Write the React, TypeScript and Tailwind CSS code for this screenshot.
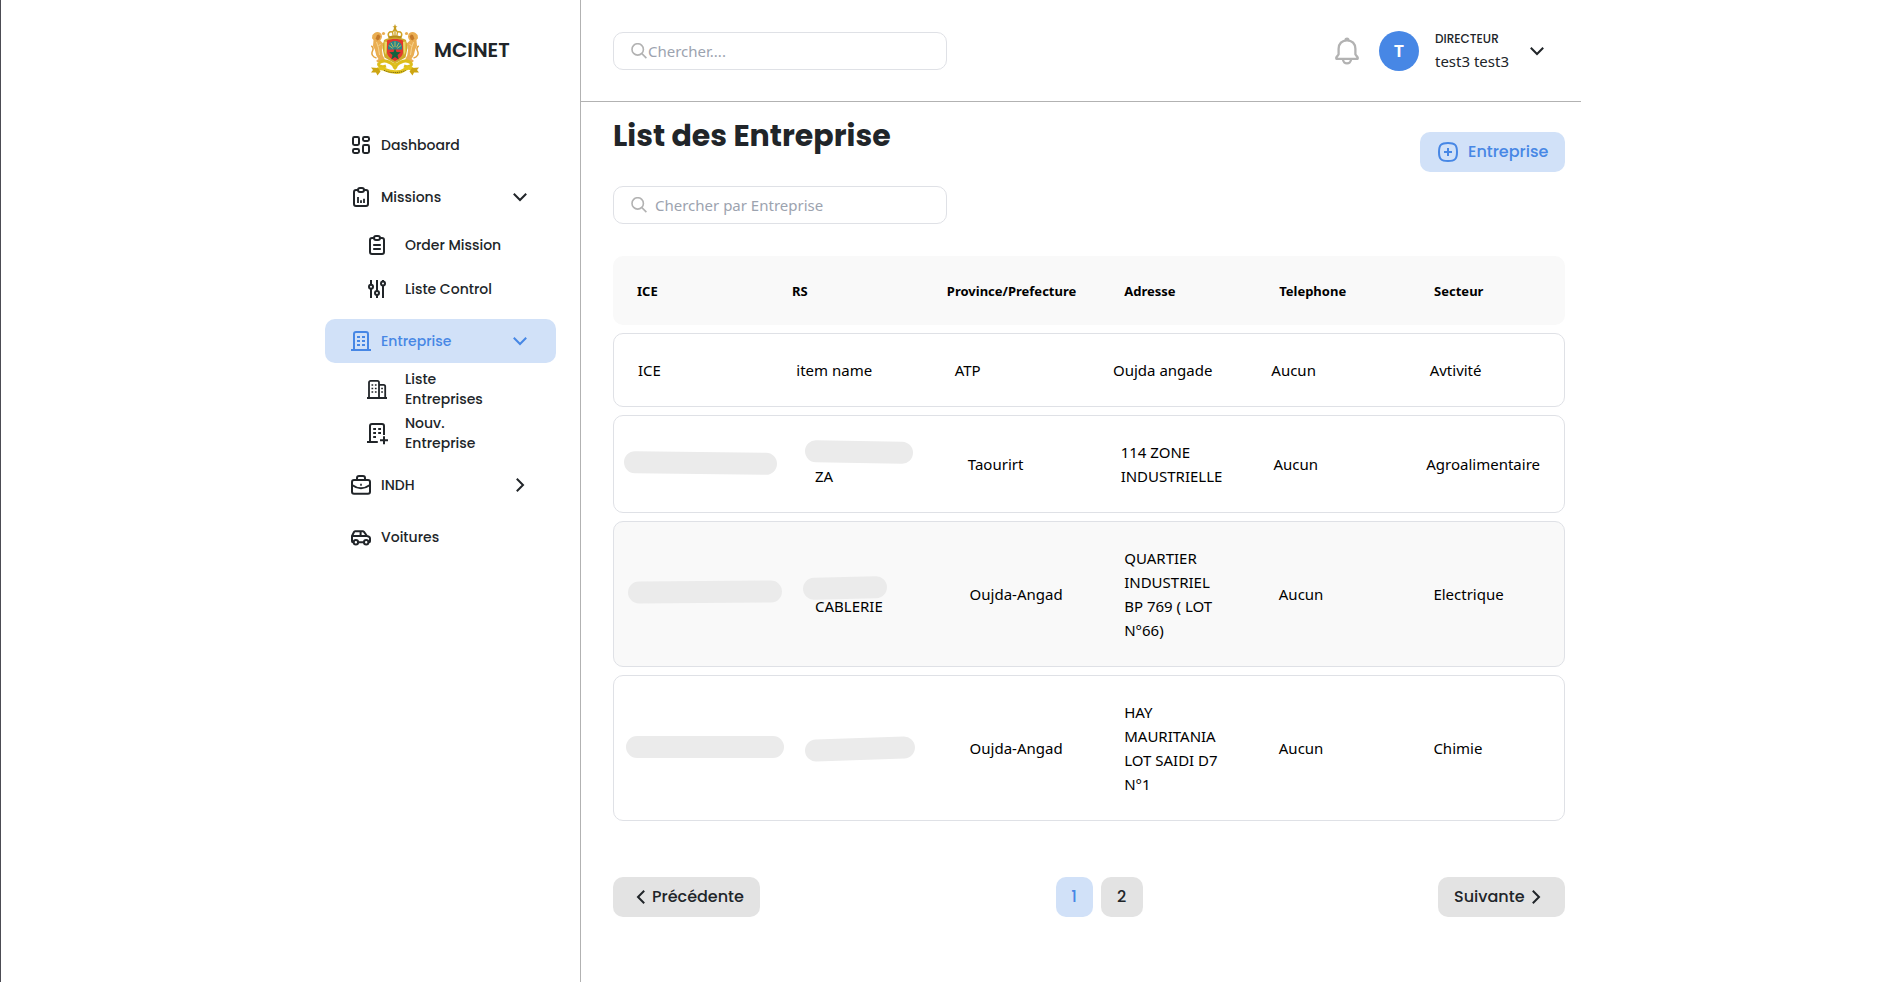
import React from "react";

type IconProps = { className?: string };

const SEGOE = "font-['Segoe_UI','Noto_Sans',sans-serif]";

function Icon({ className = "size-5 shrink-0", children }: { className?: string; children: React.ReactNode }) {
  return (
    <svg viewBox="0 0 20 20" className={className} fill="none" stroke="currentColor" strokeWidth="2" aria-hidden="true">
      {children}
    </svg>
  );
}

const DashboardIcon = () => (
  <Icon>
    <rect x="2" y="2" width="6" height="8" rx="1.4" />
    <rect x="12" y="2" width="6" height="4" rx="1.4" />
    <rect x="12" y="10" width="6" height="8" rx="1.4" />
    <rect x="2" y="14" width="6" height="4" rx="1.4" />
  </Icon>
);

const ClipboardBody = () => (
  <>
    <path d="M7 3H5a2 2 0 0 0-2 2v12a2 2 0 0 0 2 2h10a2 2 0 0 0 2-2V5a2 2 0 0 0-2-2h-2" />
    <rect x="7" y="1" width="6" height="4" rx="2" />
  </>
);

const ReportIcon = () => (
  <Icon>
    <ClipboardBody />
    <path strokeWidth="1.8" d="M7 10v6M10 13.2V16M13 11.8V16" />
  </Icon>
);

const OrderIcon = () => (
  <Icon>
    <ClipboardBody />
    <path strokeWidth="1.8" d="M6.2 10h7.6M6.2 14h7.6" />
  </Icon>
);

const SlidersIcon = () => (
  <Icon>
    <path d="M4 1v4.8M4 9.8V19M10 1v11M10 16v3M16 1v1.6M16 6.4V19" />
    <circle cx="4" cy="7.8" r="2" />
    <circle cx="10" cy="14" r="2" />
    <circle cx="16" cy="4.5" r="2" />
  </Icon>
);

const BuildingIcon = () => (
  <Icon>
    <path d="M3 19V3a2 2 0 0 1 2-2h10a2 2 0 0 1 2 2v16M0 19h20" />
    <path strokeWidth="1.8" d="M6 6h3M11 6h3M6 10h3M11 10h3M6 14h3M11 14h3" />
  </Icon>
);

const BuildingsIcon = () => (
  <Icon>
    <path strokeWidth="1.8" d="M2 18.8V3.400a1.600 1.600 0 0 1 1.600-1.600h6.800A1.600 1.600 0 0 1 12 3.400v15.400M12 5.800h4.600a1.600 1.600 0 0 1 1.600 1.600v11.400M0 19h20" />
    <path strokeWidth="1.500" d="M4.500 6h1.700M7.900 6h1.700M4.500 9.500h1.700M7.900 9.500h1.700M4.500 13h1.700M7.900 13h1.700M14.200 9.500h1.700M14.200 13h1.700" />
  </Icon>
);

const BuildingAddIcon = () => (
  <Icon className="size-5 shrink-0 overflow-visible">
    <path d="M3 19V3a2 2 0 0 1 2-2h10a2 2 0 0 1 2 2v9M0 19h10.800M17 13.200v8M13 17.200h8" />
    <path strokeWidth="1.800" d="M6.200 6h2.800M11.200 6H14M6.200 10h2.800M11.200 10H14M6.200 14h2.800" />
  </Icon>
);

const BriefcaseIcon = () => (
  <Icon>
    <rect x="1" y="5" width="18" height="13.800" rx="2" />
    <path d="M6 5V3a2 2 0 0 1 2-2h4a2 2 0 0 1 2 2v2M1 10c3 2.200 6 3.200 9 3.200s6-1 9-3.200" />
    <path d="M9.200 9.800h1.600" />
  </Icon>
);

const CarIcon = () => (
  <Icon>
    <path d="M2.600 15.200H2a1 1 0 0 1-1-1V9l2-4a1.200 1.200 0 0 1 1.100-.8h7.700c.4 0 .8.2 1 .5L16 9l2 .8a1.600 1.600 0 0 1 1 1.500v2.900a1 1 0 0 1-1 1h-.6M7.200 15.200h5.800M1 9h15M9.600 4.200V9" />
    <circle cx="4.900" cy="15.200" r="2.200" />
    <circle cx="15.200" cy="15.200" r="2.200" />
  </Icon>
);

function Chevron({ className = "" }: IconProps) {
  return (
    <svg viewBox="0 0 14 14" className={`size-3.5 shrink-0 ${className}`} fill="none" stroke="currentColor" strokeWidth="2" aria-hidden="true">
      <path d="M.8 3.800 7 10l6.200-6.200" />
    </svg>
  );
}

const SearchIcon = () => (
  <svg viewBox="0 0 16 16" className="size-4 shrink-0 text-[#b2b2b2]" fill="none" stroke="currentColor" strokeWidth="1.600" aria-hidden="true">
    <circle cx="6.700" cy="6.400" r="5.700" />
    <path d="m10.900 10.600 4.500 4.500" />
  </svg>
);

const BellIcon = () => (
  <svg viewBox="0 0 24 28" className="h-7 w-6" fill="none" stroke="currentColor" strokeWidth="2.300" strokeLinejoin="round" strokeLinecap="round" aria-hidden="true">
    <path d="M12 3.300c-5 0-8.400 3.500-8.400 8.500v5.500L1.300 20.500v1.300h21.400v-1.300l-2.300-3.200v-5.500c0-5-3.400-8.500-8.400-8.500Z" />
    <path d="M10.600 3c0-1.800 2.800-1.800 2.800 0M8 22.200c0 5.500 8 5.500 8 0" />
  </svg>
);

const AddIcon = () => (
  <Icon>
    <path d="M10 1c7 0 9 2 9 9s-2 9-9 9-9-2-9-9 2-9 9-9Z" />
    <path d="M10 6v8M6 10h8" />
  </Icon>
);

const Lion = () => (
  <g transform="translate(-3.500 0)">
    <path fill="#eaae52" d="M7 9c2.500-2 6.500-1 7.200 1.800.8 2.200-.2 4.500-1.500 5.700l2.500 2.500 3-1.500.5 1.600-3.300 2.600-1 4 .8 5.500 2 4-1.300 2.800H9.500l-.8-1.300 2.300-1.700-2.200-3.500-1.500-6L5.500 22l.5-6-1.500-1.800.4-3.300z" />
    <path fill="#c4792a" d="M9.500 11l2-.5 1.300 2-1 3-2.300 1-1.200-2.300z" />
    <path stroke="#e3a33f" strokeWidth="1.500" fill="none" d="M9 34c-4-1-5.500-4-4-7s-.3-4.500-1.300-5" />
    <path stroke="#f7d896" strokeWidth=".9" fill="none" d="M9 18l2 6 1 7M13 20l-2 2" />
  </g>
);

function Emblem() {
  return (
    <svg viewBox="0 0 48 52" className="h-13 w-12 shrink-0" role="img" aria-label="Royaume du Maroc">
      <Lion />
      <g transform="translate(48 0) scale(-1 1)">
        <Lion />
      </g>
      <path fill="#cfa92a" d="M13 16c4-3.500 18-3.500 22 0l1.500 8-2 9.500L24 39.500 13.500 33.500l-2-9.500z" />
      <path fill="#ecd768" d="M13.500 17.500l2.500.5-1 13-1.500-3zM34.500 17.500l-2.500.5 1 13 1.500-3z" />
      <path fill="#e0372f" d="M16 16.500c4-2 12-2 16 0V28c0 4.500-4.500 7-8 9-3.500-2-8-4.500-8-9z" />
      <path fill="#27868b" d="M17 24c0-4.500 3-7 7-7s7 2.500 7 7v1.500H17z" />
      <path stroke="#e4c34b" strokeWidth=".8" d="M24 17.500V23M20 18.800l2.500 4.500M28 18.800l-2.500 4.500M17.800 21.500l4 2.800M30.200 21.500l-4 2.800" />
      <path fill="#12633f" d="m24 24.500 1.500 3.500 4.300.2-3.300 2.800 1.200 4.400-3.700-2.400-3.700 2.400 1.200-4.400-3.300-2.800 4.300-.2z" />
      <path stroke="#d0a324" strokeWidth="1.500" fill="none" d="M18.500 13.500c-3-4 0-6.500 3-5.500 1.500-2.800 3.500-2.800 5 0 3-1 6 1.500 3 5.500" />
      <path stroke="#d0a324" strokeWidth="1.300" fill="none" d="M24 5.500v8M21.500 8l.8 5M26.500 8l-.8 5" />
      <path fill="#b78d18" d="M17.500 12.500c4-1.200 9-1.200 13 0v2c-4-1-9-1-13 0z" />
      <path fill="#c79c20" d="M24 0l.9 2.200 1.600.3-1.500 1 .4 2.500h-2.800l.4-2.500-1.500-1 1.600-.3z" />
      <circle cx="12.500" cy="9.500" r="1.600" fill="#eaae52" />
      <circle cx="35.500" cy="9.500" r="1.600" fill="#eaae52" />
      <path stroke="#ddbd1a" strokeWidth="3" fill="none" d="M8 39c4-4 11-2 16 3.500 5-5.500 12-7.500 16-3.500 2 3-3 4.500-7 3M8 39c-2 3 3 4.500 7 3" />
      <path stroke="#ddbd1a" strokeWidth="1.500" fill="none" d="M24 38.500c-2.500 2-2.500 5 0 6.500 2.500-1.500 2.500-4.500 0-6.500z" />
      <path stroke="#e3c41c" strokeWidth="3.600" fill="none" d="M5 46.500c3-3 6-2.500 10-.5s14 3.500 18 0 7-2.500 10 .5" />
      <path fill="#cda512" d="M7 44L0 43.500l2 2.500-2 2.500h5l1.500 3 3-4zM41 44l7-.5-2 2.500 2 2.500h-5l-1.500 3-3-4z" />
      <path stroke="#7c6a12" strokeWidth="1" strokeDasharray="1.200 .7" fill="none" d="M13 46.300c6 3 16 3 22 0" />
    </svg>
  );
}

const NAV_ROW = "flex h-11 w-full items-center rounded-[10px] px-[26px] pr-[29px] text-sm font-medium";

function NavItem({ icon, label, arrow, active }: { icon: React.ReactNode; label: string; arrow?: "down" | "right"; active?: boolean }) {
  return (
    <a href="#" className={`${NAV_ROW} ${active ? "bg-[#d1e1f8] text-[#4787e5]" : ""}`}>
      {icon}
      <span className="ml-2.5 grow">{label}</span>
      {arrow && <Chevron className={arrow === "right" ? "-rotate-90" : ""} />}
    </a>
  );
}

function SubItem({ icon, label }: { icon: React.ReactNode; label: string }) {
  return (
    <li>
      <a href="#" className="flex h-11 items-center pl-[42px] text-sm/5 font-medium">
        {icon}
        <span className="ml-[18px] w-[104px]">{label}</span>
      </a>
    </li>
  );
}

function Sidebar() {
  return (
    <aside className="w-[281px] shrink-0 border-r border-[#b2b2b2] pl-[25px] pr-6 pt-6">
      <a href="#" className="flex items-center gap-[15px] pl-[46px]">
        <Emblem />
        <span className="text-xl font-semibold">MCINET</span>
      </a>
      <nav aria-label="Menu" className="mt-[47px]">
        <ul className="flex flex-col gap-2">
          <li><NavItem icon={<DashboardIcon />} label="Dashboard" /></li>
          <li>
            <NavItem icon={<ReportIcon />} label="Missions" arrow="down" />
            <ul className="mt-1">
              <SubItem icon={<OrderIcon />} label="Order Mission" />
              <SubItem icon={<SlidersIcon />} label="Liste Control" />
            </ul>
          </li>
          <li>
            <NavItem icon={<BuildingIcon />} label="Entreprise" arrow="down" active />
            <ul className="mt-1">
              <SubItem icon={<BuildingsIcon />} label="Liste Entreprises" />
              <SubItem icon={<BuildingAddIcon />} label="Nouv. Entreprise" />
            </ul>
          </li>
          <li><NavItem icon={<BriefcaseIcon />} label="INDH" arrow="right" /></li>
          <li><NavItem icon={<CarIcon />} label="Voitures" /></li>
        </ul>
      </nav>
    </aside>
  );
}

function SearchBox({ placeholder, spaced }: { placeholder: string; spaced?: boolean }) {
  return (
    <label className={`flex h-[38px] w-[334px] items-center rounded-[10px] border border-[#dfe1e6] pl-[17px] pr-4 ${spaced ? "gap-2" : "gap-px"}`}>
      <SearchIcon />
      <input
        type="search"
        aria-label={placeholder}
        placeholder={placeholder}
        className={`${SEGOE} min-w-0 grow pt-px text-[15px] outline-none placeholder:text-[#9ca3af]`}
      />
    </label>
  );
}

function Header() {
  return (
    <header className="flex h-[102px] items-center justify-between border-b border-[#b2b2b2] pl-8 pr-[37px]">
      <SearchBox placeholder="Chercher...." />
      <div className="flex items-center">
        <button type="button" aria-label="Notifications" className="mr-5 text-[#b2b2b2]">
          <BellIcon />
        </button>
        <span className="flex size-10 items-center justify-center rounded-full bg-[#4787e5] text-lg font-semibold text-white">T</span>
        <div className="ml-4">
          <p className="text-xs/5 font-medium">DIRECTEUR</p>
          <p className={`${SEGOE} text-[15px]/6`}>test3 test3</p>
        </div>
        <button type="button" aria-label="Compte" className="ml-[21px]">
          <Chevron />
        </button>
      </div>
    </header>
  );
}

const COLUMNS = ["ICE", "RS", "Province/Prefecture", "Adresse", "Telephone", "Secteur"];

const Mask = ({ className }: { className: string }) => (
  <span className={`absolute h-[22px] rounded-full bg-[#ebebeb] ${className}`} />
);

type Row = { ice: string; rs: React.ReactNode; rsMask: string; province: string; adresse: string; telephone: string; secteur: string; shaded?: boolean };

const ROWS: Row[] = [
  {
    ice: "left-2.5 top-9 w-[153px] rotate-[0.7deg]",
    rs: "ZA",
    rsMask: "left-3.5 top-[25px] w-[108px] rotate-1",
    province: "Taourirt",
    adresse: "114 ZONE INDUSTRIELLE",
    telephone: "Aucun",
    secteur: "Agroalimentaire",
  },
  {
    ice: "left-3.5 top-[59px] w-[154px] -rotate-[0.4deg]",
    rs: "CABLERIE",
    rsMask: "left-3 top-[55px] w-[84px] -rotate-[1.5deg]",
    province: "Oujda-Angad",
    adresse: "QUARTIER INDUSTRIEL BP 769 ( LOT N°66)",
    telephone: "Aucun",
    secteur: "Electrique",
    shaded: true,
  },
  {
    ice: "left-3 top-[60px] w-[158px]",
    rs: "",
    rsMask: "left-3.5 top-[62px] w-[110px] -rotate-2",
    province: "Oujda-Angad",
    adresse: "HAY MAURITANIA LOT SAIDI D7 N°1",
    telephone: "Aucun",
    secteur: "Chimie",
  },
];

const CELL = "flex flex-1 items-center px-6";
const ROW = "flex rounded-[10px] border border-[#dfe1e6]";

function CompanyTable() {
  return (
    <table className={`${SEGOE} mt-8 block text-[15px]/6 text-black`}>
      <thead className="block">
        <tr className="flex h-[69px] rounded-[10px] bg-[#f9f9f9] text-[13px]">
          {COLUMNS.map((c) => (
            <th key={c} scope="col" className={`${CELL} font-bold`}>{c}</th>
          ))}
        </tr>
      </thead>
      <tbody className="mt-2 flex flex-col gap-2">
        <tr className={ROW}>
          {["ICE", "item name", "ATP", "Oujda angade", "Aucun", "Avtivité"].map((t) => (
            <td key={t} className={`${CELL} py-6`}>{t}</td>
          ))}
        </tr>
        {ROWS.map((r) => (
          <tr key={r.adresse} className={`${ROW} ${r.shaded ? "bg-[#f9f9f9]" : "bg-white"}`}>
            <td className="relative w-[177px] shrink-0"><Mask className={r.ice} /></td>
            <td className={`${CELL} relative`}>
              <Mask className={r.rsMask} />
              <span className="relative pt-6">{r.rs}</span>
            </td>
            <td className={CELL}>{r.province}</td>
            <td className={`${CELL} py-6`}>{r.adresse}</td>
            <td className={CELL}>{r.telephone}</td>
            <td className={CELL}>{r.secteur}</td>
          </tr>
        ))}
      </tbody>
    </table>
  );
}

const PAGE_BUTTON = "flex h-10 items-center rounded-[10px] font-medium";

function Pagination() {
  return (
    <nav aria-label="Pagination" className="mt-14 flex justify-between">
      <button type="button" className={`${PAGE_BUTTON} w-[147px] gap-1 bg-[#e3e3e3] pl-[21px]`}>
        <Chevron className="rotate-90" />
        Précédente
      </button>
      <div className="flex gap-2">
        <button type="button" aria-current="page" className={`${PAGE_BUTTON} w-[37px] justify-center bg-[#d1e1f8] text-[#4787e5]`}>1</button>
        <button type="button" className={`${PAGE_BUTTON} w-[42px] justify-center bg-[#e3e3e3]`}>2</button>
      </div>
      <button type="button" className={`${PAGE_BUTTON} w-[127px] justify-between bg-[#e3e3e3] pl-4 pr-[22px]`}>
        Suivante
        <Chevron className="-rotate-90" />
      </button>
    </nav>
  );
}

export default function App() {
  return (
    <div className="min-h-screen border-l border-[#4c4c54] bg-white font-['Poppins','Inter',sans-serif] text-[#212529]">
      <div className="mx-auto flex min-h-screen max-w-[1281px]">
        <Sidebar />
        <div className="min-w-0 grow">
          <Header />
          <main className="pl-8 pr-4 pt-3">
            <div className="flex items-start justify-between">
              <h1 className="text-3xl/11 font-bold">List des Entreprise</h1>
              <button type="button" className="mt-[18px] flex h-10 w-[145px] items-center gap-2.5 rounded-[10px] bg-[#d1e1f8] pl-[18px] font-medium text-[#4787e5]">
                <AddIcon />
                Entreprise
              </button>
            </div>
            <div className="mt-3.5">
              <SearchBox placeholder="Chercher par Entreprise" spaced />
            </div>
            <CompanyTable />
            <Pagination />
          </main>
        </div>
      </div>
    </div>
  );
}
